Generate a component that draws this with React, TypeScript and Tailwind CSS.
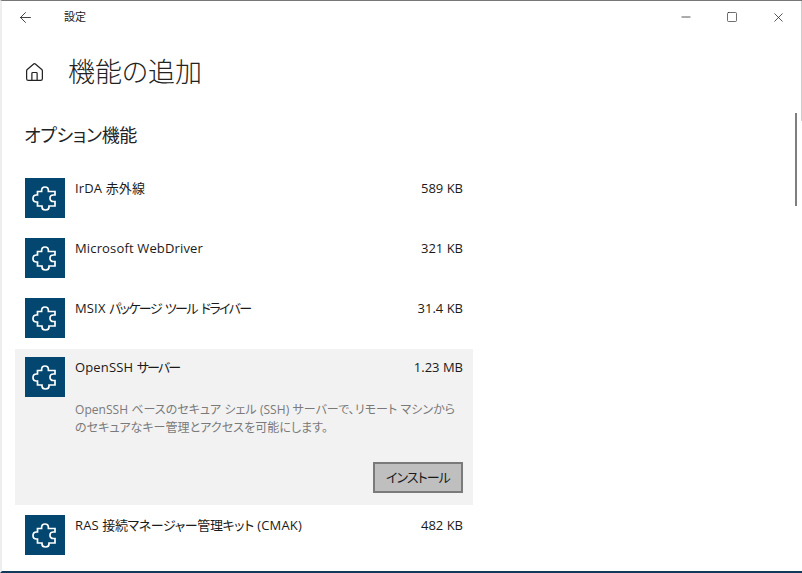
import { ArrowLeft, Home, Minus, Square, X } from "lucide-react";

const font = "font-['Open_Sans','Noto_Sans_CJK_JP',sans-serif] [font-feature-settings:'palt']";

function Puzzle() {
  return (
    <div className="h-10 w-10 shrink-0 bg-[#03466f]">
      <svg width="40" height="40" viewBox="0 0 40 40" fill="none" stroke="#fff" strokeWidth="1.7" strokeLinejoin="miter">
        <path d="M12.5 13.5H16.6V12.5C16.6 10.2 18 9 20 9C22 9 23.4 10.2 23.4 12.5V13.5H30V17H28.5C26 17 25 18.5 25 20.2C25 22 26 23.5 28.5 23.5H30V28H24V29C24 31 22.5 32 20.5 32C18.5 32 17 31 17 29V28H12.5V24H11.5C9.5 24 8 22.5 8 20.5C8 18.5 9.5 17 11.5 17H12.5Z" />
      </svg>
    </div>
  );
}

function Row({ name, size, className }: { name: React.ReactNode; size: string; className: string }) {
  return (
    <div className={`flex w-[458px] px-2.5 ${className}`}>
      <Puzzle />
      <div className="ml-2.5 mt-px flex h-5 flex-1 items-center justify-between text-[13px] text-[#1a1a1a]">
        <span className="tracking-[0.15px]">{name}</span>
        <span>{size}</span>
      </div>
    </div>
  );
}

export default function App() {
  return (
    <div className={`relative h-[573px] w-[802px] overflow-hidden border-t border-b-2 border-l-2 border-t-[#777] border-b-[#123a5a] border-l-[#eee] bg-white ${font}`}>
      <div className="flex h-[32px] items-center text-[#222]">
        <ArrowLeft size={17} strokeWidth={1.2} className="ml-[15px]" />
        <span className="ml-[30px] text-[11px]">設定</span>
        <div className="ml-auto flex items-center">
          <Minus size={14} strokeWidth={1.3} className="mr-[33px]" />
          <Square size={12} strokeWidth={1.3} className="mr-[33px]" />
          <X size={15} strokeWidth={1.2} className="mr-[16px]" />
        </div>
      </div>

      <div className="ml-[22px] mt-[16px] flex h-[46px] items-center">
        <Home size={21} strokeWidth={1.4} className="text-[#222]" />
        <h1 className="ml-[23px] text-[27px] font-light text-[#222]">機能の追加</h1>
      </div>

      <h2 className="ml-[22px] mt-[26px] text-[18px] leading-[28px] tracking-[-0.3px] text-[#222]">オプション機能</h2>

      <div className="ml-[13px] mt-[29px] flex flex-col">
        <Row name="IrDA 赤外線" size="589 KB" className="mb-5" />
        <Row name="Microsoft WebDriver" size="321 KB" className="mb-5" />
        <Row
          name={<>MSIX <span className="tracking-[-1.6px] [word-spacing:2px]">パッケージ ツール ドライバー</span></>}
          size="31.4 KB"
          className="mb-[11px]"
        />

        <div className="h-[156px] w-[458px] bg-[#f2f2f2] px-2.5 pt-2">
          <div className="flex">
            <Puzzle />
            <div className="ml-2.5 mt-px flex h-5 flex-1 items-center justify-between text-[13px] text-[#1a1a1a]">
              <span className="tracking-[0.15px]">OpenSSH <span className="tracking-[-1.9px]">サーバー</span></span>
              <span>1.23 MB</span>
            </div>
          </div>
          <p className="ml-[50px] mt-[4px] w-[390px] text-[12px] leading-[18px] tracking-[0.05px] text-[#7a7a7a]">
            OpenSSH ベースのセキュア シェル (SSH) サーバーで、リモート マシンからのセキュアなキー管理とアクセスを可能にします。
          </p>
          <div className="mt-[25px] flex justify-end">
            <button className="h-[31px] w-[90px] border-2 border-[#7a7a7a] bg-[#bfbfbf] text-[13px] tracking-[-0.9px] text-[#1a1a1a]">
              インストール
            </button>
          </div>
        </div>

        <Row
          name={<>RAS <span className="tracking-[-0.4px]">接続マネージャー管理キット</span> (CMAK)</>}
          size="482 KB"
          className="mt-[10px]"
        />
      </div>

      <div className="absolute right-[5px] top-[112px] h-[93px] w-[2px] bg-[#7f7f7f]" />
      <div className="absolute right-0 top-0 h-[120px] w-px bg-[#ccc]" />
    </div>
  );
}
